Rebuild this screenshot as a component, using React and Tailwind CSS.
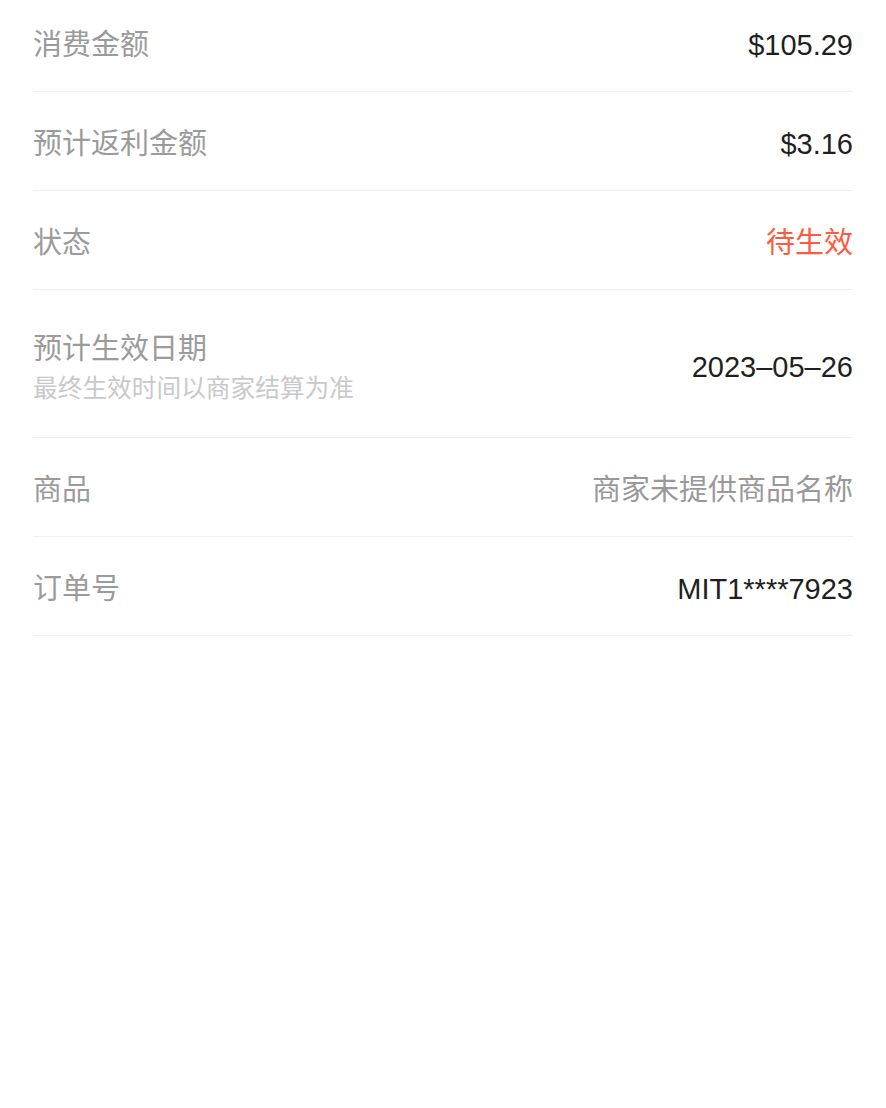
import React from 'react';

const font = { fontFamily: '"Liberation Sans", "Noto Sans CJK SC", sans-serif' };

const rows = [
  { label: '消费金额', value: '$105.29', tone: 'text-[#1f1f1f]' },
  { label: '预计返利金额', value: '$3.16', tone: 'text-[#1f1f1f]' },
  { label: '状态', value: '待生效', tone: 'text-[#ff5a3f]' },
  { label: '预计生效日期', sub: '最终生效时间以商家结算为准', value: '2023–05–26', tone: 'text-[#1f1f1f]', tall: true },
  { label: '商品', value: '商家未提供商品名称', tone: 'text-[#999999]' },
  { label: '订单号', value: 'MIT1****7923', tone: 'text-[#1f1f1f]' },
];

function Row({ label, sub, value, tone, tall }) {
  return (
    <div
      className={
        'flex items-center justify-between border-b border-[#efefef] pt-[6px] ' +
        (tall ? 'h-[148px]' : 'h-[99px]')
      }
    >
      <div className={'flex flex-col ' + (tall ? 'mt-[4px]' : '')}>
        <span className="text-[29px] leading-[40px] text-[#9b9b9b]">{label}</span>
        {sub && <span className="text-[24.7px] leading-[40px] text-[#c9c9c9]">{sub}</span>}
      </div>
      <span className={'text-[29px] leading-[40px] ' + tone}>{value}</span>
    </div>
  );
}

export default function App() {
  return (
    <div className="min-h-[1108px] bg-white overflow-hidden" style={font}>
      <div className="-mt-[7px] px-[33px]">
        {rows.map((r) => (
          <Row key={r.label} {...r} />
        ))}
      </div>
    </div>
  );
}
